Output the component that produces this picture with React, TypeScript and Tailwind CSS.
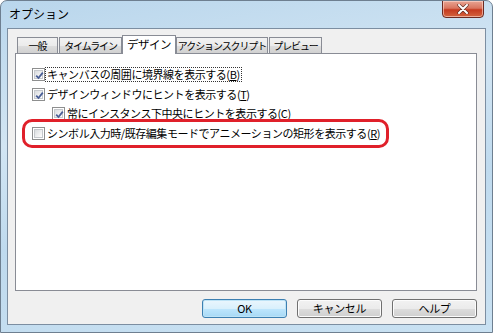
import React from "react";

const font = { fontFamily: '"Noto Sans CJK JP", "Noto Sans", sans-serif' };

function Check({ checked }: { checked: boolean }) {
  return (
    <div className="w-[13px] h-[13px] shrink-0 border border-[#8e8f8f] bg-white p-[1px]">
      <div className="w-full h-full border border-[#c5c8cc] bg-[linear-gradient(135deg,#d9dcdf_0%,#f4f4f4_70%,#ffffff_100%)] relative">
        {checked && (
          <svg viewBox="0 0 9 9" className="absolute left-[0px] top-[0px] w-[9px] h-[9px]">
            <path d="M1.2 4.6 L3.5 7 L7.8 1.6" fill="none" stroke="#4a5f97" strokeWidth="1.8" />
          </svg>
        )}
      </div>
    </div>
  );
}

function Row({
  checked,
  label,
  mn,
  indent,
  focus,
}: {
  checked: boolean;
  label: string;
  mn: string;
  indent?: boolean;
  focus?: boolean;
}) {
  return (
    <div className={`flex items-center h-[19.5px] ${indent ? "pl-[20px]" : ""}`}>
      <Check checked={checked} />
      <span
        className={`ml-[1px] px-[1px] text-[11px] leading-[13px] tracking-[-0.45px] text-black whitespace-nowrap ${
          focus ? "outline outline-1 outline-dotted outline-[#333]" : ""
        }`}
      >
        {label}(<span className="underline underline-offset-[1px]">{mn}</span>)
      </span>
    </div>
  );
}

function Tab({ label, w, active }: { label: string; w: string; active?: boolean }) {
  if (active) {
    return (
      <div
        className={`${w} h-[19px] relative z-10 bg-white border border-b-0 border-[#898c95] flex items-start justify-center pt-[1px] text-[11.5px] tracking-[-0.5px] leading-[15px] whitespace-nowrap`}
      >
        {label}
      </div>
    );
  }
  return (
    <div
      className={`${w} h-[17px] border border-[#898c95] border-b-0 bg-[linear-gradient(180deg,#f2f2f2_0%,#ebebeb_50%,#dddddd_51%,#cfcfcf_100%)] flex items-center justify-center text-[10px] tracking-[-1.1px] leading-[14px] whitespace-nowrap`}
    >
      {label}
    </div>
  );
}

function Btn({ label, def }: { label: string; def?: boolean }) {
  return (
    <div
      className={`w-[85px] h-[19px] rounded-[3px] border flex items-center justify-center text-[11px] tracking-[-0.3px] ${
        def
          ? "border-[#3c7fb1] bg-[linear-gradient(180deg,#eaf6fd_0%,#d9f0fc_50%,#bee6fd_51%,#a7d9f5_100%)] shadow-[inset_0_0_0_1px_#bde3f6]"
          : "border-[#707070] bg-[linear-gradient(180deg,#f2f2f2_0%,#ebebeb_50%,#dddddd_51%,#cfcfcf_100%)] shadow-[inset_0_0_0_1px_#fcfcfc]"
      }`}
    >
      {label}
    </div>
  );
}

export default function App() {
  return (
    <div
      style={font}
      className="w-[493px] h-[333px] relative overflow-hidden rounded-t-[7px] border border-[#6e7f90] bg-[linear-gradient(170deg,#b9d6ec_0%,#d2e5f3_35%,#bfdaee_60%,#c9e1f2_100%)] flex flex-col"
    >
      {/* title bar */}
      <div className="h-[27px] flex items-start shrink-0 relative">
        <div className="pl-[8px] pt-[6px] text-[12px] leading-[14px] text-black">
          オプション
        </div>
        <div className="absolute right-[8px] top-[-1px] w-[42px] h-[18px] rounded-b-[4px] border border-[#6b2a22] bg-[linear-gradient(180deg,#e8a493_0%,#d9755f_45%,#c53a1f_55%,#d3643f_100%)] shadow-[inset_0_0_0_1px_rgba(255,220,210,0.6)] flex items-center justify-center">
          <svg viewBox="0 0 12 10" className="w-[12px] h-[10px]">
            <path d="M2 1 L10 9 M10 1 L2 9" stroke="#5a2a22" strokeWidth="3.2" strokeLinecap="round" />
            <path d="M2 1 L10 9 M10 1 L2 9" stroke="#ffffff" strokeWidth="2" strokeLinecap="round" />
          </svg>
        </div>
      </div>

      {/* client area */}
      <div className="mx-[6px] mb-[7px] flex-1 border border-[#7c8ea1] bg-[#f0f0f0] flex flex-col pl-[7px] pr-[8px] pt-[6px]">
        <div className="flex items-end h-[19px] pl-[2px] -mb-px">
          <Tab label="一般" w="w-[41px]" />
          <div className="w-[1px]" />
          <Tab label="タイムライン" w="w-[63px]" />
          <Tab label="デザイン" w="w-[54px]" active />
          <Tab label="アクションスクリプト" w="w-[92px]" />
          <div className="w-[1px]" />
          <Tab label="プレビュー" w="w-[53px]" />
        </div>
        <div className="h-[238px] border border-[#898c95] bg-white pl-[16px] pt-[11px] flex flex-col">
          <Row checked label="キャンバスの周囲に境界線を表示する" mn="B" focus />
          <Row checked label="デザインウィンドウにヒントを表示する" mn="T" />
          <Row checked indent label="常にインスタンス下中央にヒントを表示する" mn="C" />
          <div className="relative">
            <Row checked={false} label="シンボル入力時/既存編集モードでアニメーションの矩形を表示する" mn="R" />
            <div className="absolute left-[-10px] top-[-5px] w-[367px] h-[29px] rounded-[10px] border-[3px] border-[#e0202a]" />
          </div>
        </div>
        <div className="flex justify-end gap-[10px] pt-[8px] pr-[0px]">
          <Btn label="OK" def />
          <Btn label="キャンセル" />
          <Btn label="ヘルプ" />
        </div>
      </div>
    </div>
  );
}
